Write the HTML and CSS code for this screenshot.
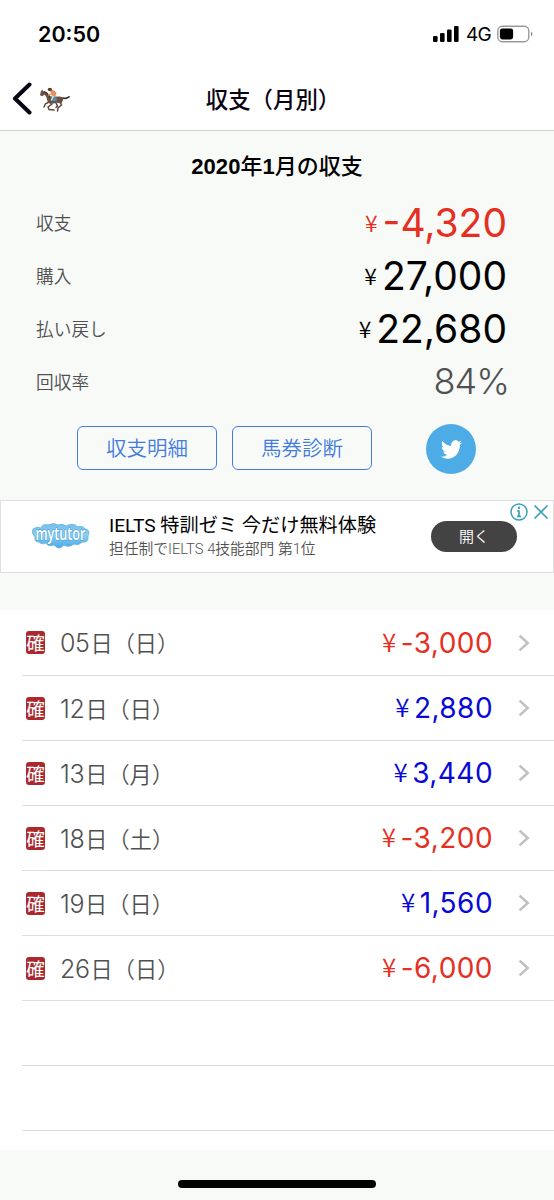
FILE: index.html
```html
<!DOCTYPE html>
<html lang="ja">
<head>
<meta charset="utf-8">
<title>収支（月別）</title>
<link rel="stylesheet" href="styles.css">
</head>
<body>
<header class="top">
  <div class="status">
    <span class="clock">20:50</span>
    <div class="status-right">
      <svg class="signal" width="26" height="16" viewBox="0 0 26 16"><rect x="0" y="10" width="4.6" height="6" rx="1.2"/><rect x="7" y="7" width="4.6" height="9" rx="1.2"/><rect x="14" y="3.6" width="4.6" height="12.4" rx="1.2"/><rect x="21" y="0" width="4.6" height="16" rx="1.2"/></svg>
      <span class="network">4G</span>
      <svg width="37" height="18" viewBox="0 0 37 18"><rect x=".8" y="1.2" width="31" height="15.5" rx="4.6" fill="#fff" stroke="#999" stroke-width="1.4"/><rect x="2.9" y="3.4" width="13.2" height="11" rx="2.4"/><path d="M34 6.5q3 2.2 0 5z" fill="#888"/></svg>
    </div>
  </div>
  <nav class="nav">
    <div class="back">
      <svg width="21" height="34" viewBox="0 0 21 34"><path d="M18.5 3.5 4 17.5 18.5 31.5" fill="none" stroke="#090414" stroke-width="4" stroke-linecap="round" stroke-linejoin="round"/></svg>
      <svg class="horse" width="32" height="26" viewBox="0 0 32 26">
        <g fill="none" stroke-linecap="round" stroke-linejoin="round">
          <path d="M24 11q3 1.2 6-1.2" stroke="#302a2b" stroke-width="1.7"/>
          <path d="M10 15 6.5 16.8 5 20M13 17 9 20 10 22.5 15 23M21 14.5 22.5 18 19 21 18.5 24M17 16 18.5 19 17 20.5" stroke="#59443a" stroke-width="1.5"/>
        </g>
        <path d="M1 8.2 1.8 4.5 3.2 2.5 4.2 4.3 7 5.2 12 9.8 21 9.5Q25 10 24 13.5L22 16.5 18 15.8 11.5 17Q8 15.5 7.6 10.5L5.5 7.6 3.4 9.3Z" fill="#6b5040"/>
        <path d="M5 4.5Q8.5 5.5 11 10" fill="none" stroke="#2e2928" stroke-width="1.1"/>
        <path d="M12 9.5 17.5 9.8 18 14 13 14.2Z" fill="#4b8ead"/>
        <path d="M11 3.5Q15 1.5 17.5 6L16 10 12.5 8.2Z" fill="#e88e58"/>
        <path d="M13 7 9 8" stroke="#d9a079" stroke-width="1.4"/>
        <path d="M14.5 9 12.2 13.5" stroke="#e8e8e2" stroke-width="1.2"/>
        <ellipse cx="10.9" cy="2.4" rx="2.1" ry="1.7" fill="#53372c"/>
      </svg>
    </div>
    <h1 class="title">収支（月別）</h1>
  </nav>
</header>
<main>
  <section class="summary">
    <h2 class="heading"><span class="hd">2020</span>年<span class="hd">1</span>月の収支</h2>
    <div class="stat"><span class="label">収支</span><span class="value red"><i class="yen">¥</i>-4,320</span></div>
    <div class="stat"><span class="label">購入</span><span class="value"><i class="yen">¥</i>27,000</span></div>
    <div class="stat"><span class="label">払い戻し</span><span class="value"><i class="yen">¥</i>22,680</span></div>
    <div class="stat"><span class="label">回収率</span><span class="value rate">84%</span></div>
    <div class="actions">
      <a class="button">収支明細</a>
      <a class="button">馬券診断</a>
      <a class="twitter"><svg width="21" height="19" viewBox="0 2 24 20" preserveAspectRatio="none"><path fill="#fff" d="M23.953 4.57a10 10 0 01-2.825.775 4.958 4.958 0 002.163-2.723c-.951.555-2.005.959-3.127 1.184a4.92 4.92 0 00-8.384 4.482C7.69 8.095 4.067 6.13 1.64 3.162a4.822 4.822 0 00-.666 2.475c0 1.71.87 3.213 2.188 4.096a4.904 4.904 0 01-2.228-.616v.06a4.923 4.923 0 003.946 4.827 4.996 4.996 0 01-2.212.085 4.936 4.936 0 004.604 3.417 9.867 9.867 0 01-6.102 2.105c-.39 0-.779-.023-1.17-.067a13.995 13.995 0 007.557 2.209c9.053 0 13.998-7.496 13.998-13.985 0-.21 0-.42-.015-.63A9.935 9.935 0 0024 4.59z"/></svg></a>
    </div>
  </section>
  <aside class="ad">
    <svg class="logo" width="60" height="28" viewBox="0 0 60 28">
      <defs><linearGradient id="cloud" x2="0" y2="1"><stop offset="0" stop-color="#79bfe9"/><stop offset=".5" stop-color="#8bcdf3"/><stop offset="1" stop-color="#4ba8e3"/></linearGradient></defs>
      <path d="M4 15Q0 11 2 7Q6 4 10 6Q12 1 17 3Q23 0 27 3Q32 1 35 4Q42 0 47 5Q52 3 54 7Q60 8 57 14Q58 21 51 20Q48 24 43 22Q38 26 33 23Q28 29 23 23Q17 25 15 21Q10 23 8 20Q3 20 4 15Z" fill="url(#cloud)" stroke="#5db2e4" stroke-width=".8"/>
      <text class="logo-text" x="4.5" y="18" textLength="50" lengthAdjust="spacingAndGlyphs">mytutor</text>
    </svg>
    <div class="ad-copy"><div class="ad-title">IELTS 特訓ゼミ 今だけ無料体験</div><div class="ad-sub">担任制でIELTS 4技能部門 第1位</div></div>
    <a class="open">開く</a>
    <svg class="ad-marks" width="42" height="20" viewBox="0 0 42 20" fill="none" stroke="#3a9fc0" stroke-width="1.5"><circle cx="10" cy="10" r="8"/><path d="M10 8.5v6M8.3 8.8H10M8 14.3h4" stroke-width="1.7"/><circle cx="10" cy="5.7" r="1.2" fill="#3a9fc0" stroke="none"/><path d="m26 4 12 12m0-12L26 16" stroke-width="1.7" stroke-linecap="round"/></svg>
  </aside>
  <ul class="days">
    <li class="day"><span class="seal">確</span><span class="date"><b>05</b>日（日）</span><span class="amount red"><i class="yen">¥</i>-3,000</span><svg class="arrow" viewBox="0 0 12 20"><path d="m2.5 3.5 7.2 6.5-7.2 6.5"/></svg></li>
    <li class="day"><span class="seal">確</span><span class="date"><b>12</b>日（日）</span><span class="amount"><i class="yen">¥</i>2,880</span><svg class="arrow" viewBox="0 0 12 20"><path d="m2.5 3.5 7.2 6.5-7.2 6.5"/></svg></li>
    <li class="day"><span class="seal">確</span><span class="date"><b>13</b>日（月）</span><span class="amount"><i class="yen">¥</i>3,440</span><svg class="arrow" viewBox="0 0 12 20"><path d="m2.5 3.5 7.2 6.5-7.2 6.5"/></svg></li>
    <li class="day"><span class="seal">確</span><span class="date"><b>18</b>日（土）</span><span class="amount red"><i class="yen">¥</i>-3,200</span><svg class="arrow" viewBox="0 0 12 20"><path d="m2.5 3.5 7.2 6.5-7.2 6.5"/></svg></li>
    <li class="day"><span class="seal">確</span><span class="date"><b>19</b>日（日）</span><span class="amount"><i class="yen">¥</i>1,560</span><svg class="arrow" viewBox="0 0 12 20"><path d="m2.5 3.5 7.2 6.5-7.2 6.5"/></svg></li>
    <li class="day"><span class="seal">確</span><span class="date"><b>26</b>日（日）</span><span class="amount red"><i class="yen">¥</i>-6,000</span><svg class="arrow" viewBox="0 0 12 20"><path d="m2.5 3.5 7.2 6.5-7.2 6.5"/></svg></li>
    <li class="day"></li>
    <li class="day"></li>
  </ul>
</main>
<footer class="bottom"><div class="home"></div></footer>
</body>
</html>
```
FILE: styles.css
```css
* { box-sizing: border-box; }
body { margin: 0; width: 554px; height: 1200px; overflow: hidden; background: #f8faf8; color: #000; font-family: "Noto Sans CJK JP", sans-serif; }
svg { display: block; flex: none; }
h1, h2, ul { margin: 0; padding: 0; }
i { font-style: normal; }
.top { height: 131px; background: #fff; border-bottom: 1px solid #d0d1d0; }
.status { height: 66px; padding: 2px 20px 0 38px; display: flex; align-items: center; justify-content: space-between; }
.clock { font: 600 21.5px/30px Inter, sans-serif; }
.status-right { display: flex; align-items: center; }
.network { font: 400 19px/24px Inter, sans-serif; margin: 0 6px 0 7px; padding-top: 2px; letter-spacing: -.7px; }
.nav { height: 64px; display: grid; grid-template-columns: 80px 1fr 80px; align-items: center; }
.back { display: flex; align-items: center; padding: 0 0 0 11px; gap: 7px; }
.horse { margin-top: 4px; }
.title { font-size: 22.4px; line-height: 32px; font-weight: 500; text-align: center; margin: 0 4px 1px -4px; white-space: nowrap; color: #090414; }
.summary { height: 369px; padding: 15px 47px 0 36px; }
.heading { font-size: 22px; line-height: 36px; font-weight: 500; text-align: center; margin-right: -11px; }
.hd { font-family: "Liberation Sans", sans-serif; font-weight: 700; letter-spacing: .1px; }
.stat { height: 53px; display: flex; align-items: center; justify-content: space-between; }
.heading + .stat { margin-top: 11px; }
.label { padding-bottom: 2px; font-size: 17.7px; font-weight: 350; color: #505050; }
.value { font: 400 39px/53px Inter, sans-serif; color: #000; }
.value .yen { font: 350 23px/22px "Noto Sans CJK JP", sans-serif; margin-right: 5px; vertical-align: 5px; }
.value.rate { font-size: 36px; font-weight: 350; color: #505050; letter-spacing: -1px; margin-right: -2px; }
.value.red, .amount.red { color: #e52f23; }
.actions { display: flex; align-items: center; height: 50px; margin: 15px 0 0 41px; }
.button { width: 140px; height: 44px; margin-right: 15px; border: 1.5px solid #437cdd; border-radius: 6px; color: #437cdd; font-size: 20.5px; font-weight: 350; line-height: 41px; text-align: center; }
.twitter { width: 50px; height: 50px; margin: 2px 0 0 39px; border-radius: 50%; background: #4dabe6; display: flex; align-items: center; justify-content: center; }
.ad { position: relative; height: 73px; background: #fff; border: 1px solid #dfdfdf; display: flex; padding-left: 30px; }
.logo { margin-top: 21px; overflow: visible; }
.logo-text { font: 600 18px "Open Sans", sans-serif; fill: #fff; stroke: #3d9bd5; stroke-width: 1.2px; paint-order: stroke; }
.ad-copy { margin: 11px 0 0 18px; width: 322px; white-space: nowrap; }
.ad-title { font: 400 19.2px/28px Roboto, "Noto Sans CJK JP", sans-serif; }
.ad-sub { font: 350 14.75px/19px Roboto, "Noto Sans CJK JP", sans-serif; color: #505050; }
.open { margin-top: 20px; width: 86px; height: 31px; border-radius: 16px; background: #434343; color: #fff; font-size: 15px; font-weight: 350; line-height: 29px; text-align: center; }
.ad-marks { position: absolute; right: 2px; top: 1px; }
.days { margin-top: 37px; height: 540px; background: #fff; list-style: none; }
.day { height: 65px; padding-left: 4px; margin-left: 22px; border-bottom: 1px solid #dcdcdc; display: flex; align-items: center; }
.days .day:first-child { height: 66px; }
.seal { width: 19px; height: 23px; border-radius: 3px; background: #ab292d; color: #fff; font-size: 18.5px; line-height: 22px; font-weight: 400; text-align: center; white-space: nowrap; }
.date { margin: 1px 0 0 15px; font-size: 22.2px; font-weight: 350; color: #505050; line-height: 38px; display: flex; }
.date b { font: 350 25px/40px Inter, sans-serif; margin-right: 1px; letter-spacing: -.4px; }
.amount { margin-left: auto; font: 400 28px/40px Inter, sans-serif; letter-spacing: .45px; color: #0909d5; }
.amount .yen { font: 350 26px/22px "Noto Sans CJK JP", sans-serif; margin-right: 4px; vertical-align: 1px; }
.arrow { width: 12px; height: 20px; margin: 0 24px 0 25px; fill: none; stroke: #c1c1c1; stroke-width: 2.6; stroke-linecap: square; }
.bottom { height: 50px; padding-top: 30px; }
.home { width: 198px; height: 8px; margin: 0 auto; border-radius: 4px; background: #000; }
```
